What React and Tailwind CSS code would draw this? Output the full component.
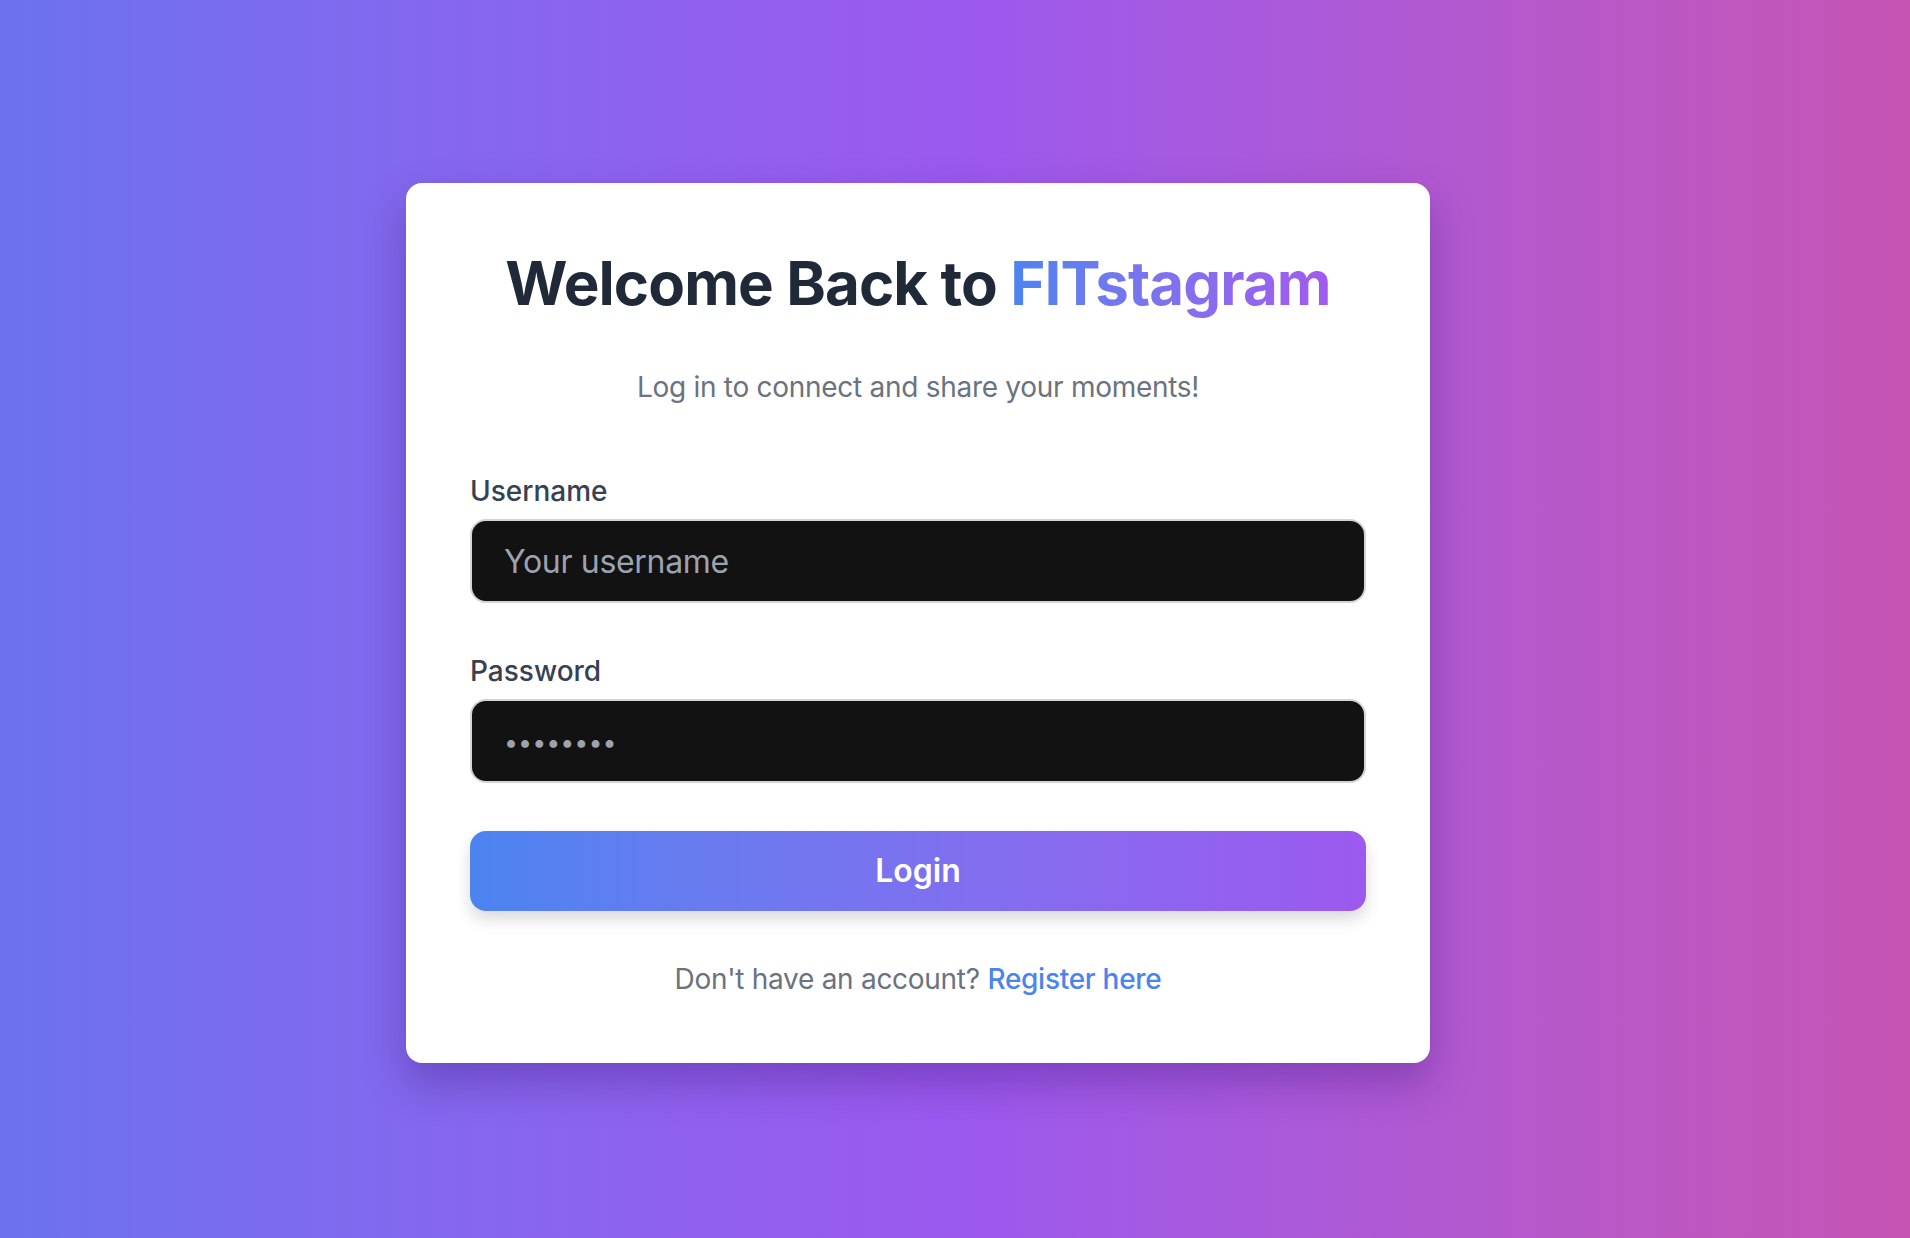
import { useState } from "react";

export default function App() {
  const [username, setUsername] = useState("");
  const [password, setPassword] = useState("");

  return (
    <div
      className="min-h-screen w-full flex items-center justify-center pr-[74px] pt-[8px] bg-gradient-to-r from-[#6c72ec] via-[#9b59ee] to-[#c654b3]"
      style={{ fontFamily: "Inter, 'Noto Sans', sans-serif" }}
    >
      <div className="w-[1024px] bg-white rounded-2xl p-16 shadow-[0_20px_40px_rgba(60,20,120,0.35)]">
        <h1 className="text-center text-[60px] leading-[72px] font-bold tracking-[-0.015em] text-[#1f2937]">
          Welcome Back to{" "}
          <span className="bg-gradient-to-r from-[#4c84ef] to-[#a259ee] bg-clip-text text-transparent">
            FITstagram
          </span>
        </h1>

        <p className="mt-12 text-center text-[28px] leading-[40px] tracking-[-0.01em] text-[#6b7280]">
          Log in to connect and share your moments!
        </p>

        {/* Form */}
        <form className="mt-16" onSubmit={(e) => e.preventDefault()}>
          <label className="block text-[28px] leading-[40px] font-medium text-[#374151] mb-2">
            Username
          </label>
          <input
            type="text"
            value={username}
            onChange={(e) => setUsername(e.target.value)}
            placeholder="Your username"
            className="block w-full h-[84px] px-8 bg-[#121212] text-white text-[32px] tracking-[-0.01em] rounded-2xl border-2 border-[#d1d5db] placeholder:text-[#9ca3af] outline-none"
          />

          <label className="block mt-12 text-[28px] leading-[40px] font-medium text-[#374151] mb-2">
            Password
          </label>
          <input
            type="password"
            value={password}
            onChange={(e) => setPassword(e.target.value)}
            placeholder="••••••••"
            className="block w-full h-[84px] px-8 pb-[3px] bg-[#121212] text-white text-[32px] rounded-2xl border-2 border-[#d1d5db] placeholder:text-[#9ca3af] placeholder:text-[25px] outline-none"
          />

          <button
            type="submit"
            className="mt-12 w-full h-[80px] rounded-2xl bg-gradient-to-r from-[#4b84ef] to-[#9c59ee] text-white text-[32px] font-semibold shadow-[0_8px_16px_rgba(0,0,0,0.15)]"
          >
            Login
          </button>
        </form>

        <p className="mt-12 text-center text-[28px] leading-[40px] tracking-[-0.01em] text-[#6b7280]">
          Don't have an account?{" "}
          <a href="#" className="text-[#4b84ef] font-medium">
            Register here
          </a>
        </p>
      </div>
    </div>
  );
}
